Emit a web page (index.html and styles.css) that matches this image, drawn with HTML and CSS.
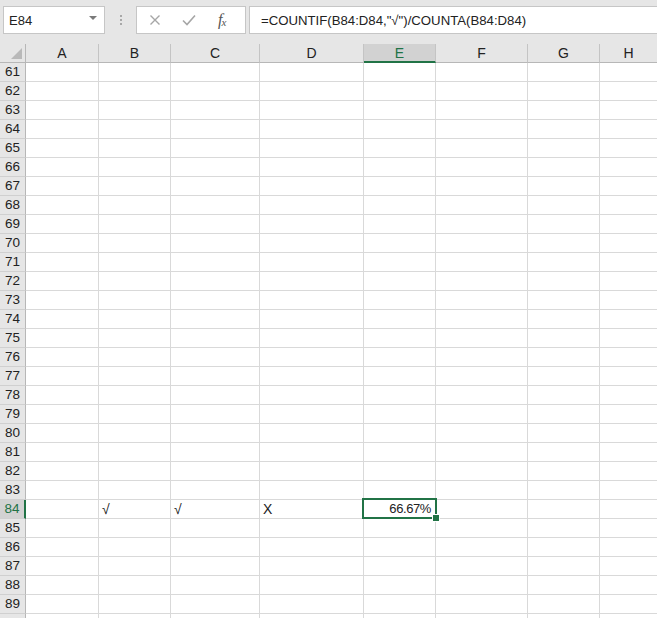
FILE: index.html
```html
<!DOCTYPE html>
<html>
<head>
<meta charset="utf-8">
<link rel="stylesheet" href="styles.css">
</head>
<body>
<div class="toolbar">
  <div class="namebox"><span class="name">E84</span><span class="arrow"></span></div>
  <div class="dots"><i></i><i></i><i></i></div>
  <div class="fxbox">
    <svg class="ico" width="14" height="14" viewBox="0 0 14 14"><path d="M2.5 2.5 L11.5 11.5 M11.5 2.5 L2.5 11.5" stroke="#a6a6a6" stroke-width="1.4" fill="none"/></svg>
    <svg class="ico" width="16" height="14" viewBox="0 0 16 14"><path d="M2 7.5 L6 11.5 L14 2.5" stroke="#a6a6a6" stroke-width="1.6" fill="none"/></svg>
    <span class="fx">f<sub>x</sub></span>
  </div>
  <div class="formula">=COUNTIF(B84:D84,"√")/COUNTA(B84:D84)</div>
</div>
<div class="grid">
  <div class="corner"><span class="tri"></span></div><div class="ch">A</div><div class="ch">B</div><div class="ch">C</div><div class="ch">D</div><div class="ch sel">E</div><div class="ch">F</div><div class="ch">G</div><div class="ch last">H</div>
  <div class="rh">61</div><div class="c"></div><div class="c"></div><div class="c"></div><div class="c"></div><div class="c"></div><div class="c"></div><div class="c"></div><div class="c last"></div>
  <div class="rh">62</div><div class="c"></div><div class="c"></div><div class="c"></div><div class="c"></div><div class="c"></div><div class="c"></div><div class="c"></div><div class="c last"></div>
  <div class="rh">63</div><div class="c"></div><div class="c"></div><div class="c"></div><div class="c"></div><div class="c"></div><div class="c"></div><div class="c"></div><div class="c last"></div>
  <div class="rh">64</div><div class="c"></div><div class="c"></div><div class="c"></div><div class="c"></div><div class="c"></div><div class="c"></div><div class="c"></div><div class="c last"></div>
  <div class="rh">65</div><div class="c"></div><div class="c"></div><div class="c"></div><div class="c"></div><div class="c"></div><div class="c"></div><div class="c"></div><div class="c last"></div>
  <div class="rh">66</div><div class="c"></div><div class="c"></div><div class="c"></div><div class="c"></div><div class="c"></div><div class="c"></div><div class="c"></div><div class="c last"></div>
  <div class="rh">67</div><div class="c"></div><div class="c"></div><div class="c"></div><div class="c"></div><div class="c"></div><div class="c"></div><div class="c"></div><div class="c last"></div>
  <div class="rh">68</div><div class="c"></div><div class="c"></div><div class="c"></div><div class="c"></div><div class="c"></div><div class="c"></div><div class="c"></div><div class="c last"></div>
  <div class="rh">69</div><div class="c"></div><div class="c"></div><div class="c"></div><div class="c"></div><div class="c"></div><div class="c"></div><div class="c"></div><div class="c last"></div>
  <div class="rh">70</div><div class="c"></div><div class="c"></div><div class="c"></div><div class="c"></div><div class="c"></div><div class="c"></div><div class="c"></div><div class="c last"></div>
  <div class="rh">71</div><div class="c"></div><div class="c"></div><div class="c"></div><div class="c"></div><div class="c"></div><div class="c"></div><div class="c"></div><div class="c last"></div>
  <div class="rh">72</div><div class="c"></div><div class="c"></div><div class="c"></div><div class="c"></div><div class="c"></div><div class="c"></div><div class="c"></div><div class="c last"></div>
  <div class="rh">73</div><div class="c"></div><div class="c"></div><div class="c"></div><div class="c"></div><div class="c"></div><div class="c"></div><div class="c"></div><div class="c last"></div>
  <div class="rh">74</div><div class="c"></div><div class="c"></div><div class="c"></div><div class="c"></div><div class="c"></div><div class="c"></div><div class="c"></div><div class="c last"></div>
  <div class="rh">75</div><div class="c"></div><div class="c"></div><div class="c"></div><div class="c"></div><div class="c"></div><div class="c"></div><div class="c"></div><div class="c last"></div>
  <div class="rh">76</div><div class="c"></div><div class="c"></div><div class="c"></div><div class="c"></div><div class="c"></div><div class="c"></div><div class="c"></div><div class="c last"></div>
  <div class="rh">77</div><div class="c"></div><div class="c"></div><div class="c"></div><div class="c"></div><div class="c"></div><div class="c"></div><div class="c"></div><div class="c last"></div>
  <div class="rh">78</div><div class="c"></div><div class="c"></div><div class="c"></div><div class="c"></div><div class="c"></div><div class="c"></div><div class="c"></div><div class="c last"></div>
  <div class="rh">79</div><div class="c"></div><div class="c"></div><div class="c"></div><div class="c"></div><div class="c"></div><div class="c"></div><div class="c"></div><div class="c last"></div>
  <div class="rh">80</div><div class="c"></div><div class="c"></div><div class="c"></div><div class="c"></div><div class="c"></div><div class="c"></div><div class="c"></div><div class="c last"></div>
  <div class="rh">81</div><div class="c"></div><div class="c"></div><div class="c"></div><div class="c"></div><div class="c"></div><div class="c"></div><div class="c"></div><div class="c last"></div>
  <div class="rh">82</div><div class="c"></div><div class="c"></div><div class="c"></div><div class="c"></div><div class="c"></div><div class="c"></div><div class="c"></div><div class="c last"></div>
  <div class="rh">83</div><div class="c"></div><div class="c"></div><div class="c"></div><div class="c"></div><div class="c"></div><div class="c"></div><div class="c"></div><div class="c last"></div>
  <div class="rh sel">84</div><div class="c"></div><div class="c txt">√</div><div class="c txt">√</div><div class="c txt">X</div><div class="c num active">66.67%<span class="selbox"></span><span class="handle"></span></div><div class="c"></div><div class="c"></div><div class="c last"></div>
  <div class="rh">85</div><div class="c"></div><div class="c"></div><div class="c"></div><div class="c"></div><div class="c"></div><div class="c"></div><div class="c"></div><div class="c last"></div>
  <div class="rh">86</div><div class="c"></div><div class="c"></div><div class="c"></div><div class="c"></div><div class="c"></div><div class="c"></div><div class="c"></div><div class="c last"></div>
  <div class="rh">87</div><div class="c"></div><div class="c"></div><div class="c"></div><div class="c"></div><div class="c"></div><div class="c"></div><div class="c"></div><div class="c last"></div>
  <div class="rh">88</div><div class="c"></div><div class="c"></div><div class="c"></div><div class="c"></div><div class="c"></div><div class="c"></div><div class="c"></div><div class="c last"></div>
  <div class="rh">89</div><div class="c"></div><div class="c"></div><div class="c"></div><div class="c"></div><div class="c"></div><div class="c"></div><div class="c"></div><div class="c last"></div>
  <div class="rh"></div><div class="c"></div><div class="c"></div><div class="c"></div><div class="c"></div><div class="c"></div><div class="c"></div><div class="c"></div><div class="c last"></div>
</div>
</body>
</html>
```
FILE: styles.css
```css
* { box-sizing: border-box; }
html, body { margin: 0; padding: 0; }
body {
  width: 657px;
  height: 618px;
  overflow: hidden;
  background: #ffffff;
  font-family: "Liberation Sans", Arial, sans-serif;
  color: #222;
}
.toolbar {
  height: 44px;
  background: #e6e6e6;
  display: flex;
  align-items: flex-start;
  padding-top: 6px;
  padding-left: 3px;
}
.namebox {
  width: 102px;
  height: 28px;
  background: #fff;
  border: 1px solid #c6c6c6;
  display: flex;
  align-items: center;
  justify-content: space-between;
  padding: 0 7px 0 5px;
  font-size: 13px;
  color: #222;
}
.arrow {
  width: 0; height: 0;
  border-left: 4px solid transparent;
  border-right: 4px solid transparent;
  border-top: 4px solid #7a7a7a;
  margin-top: -4px;
}
.dots {
  width: 31px;
  height: 28px;
  display: flex;
  flex-direction: column;
  align-items: center;
  justify-content: center;
  gap: 2px;
}
.dots i {
  display: block;
  width: 2px; height: 2px;
  background: #a8a8a8;
}
.fxbox {
  width: 110px;
  height: 28px;
  background: #fff;
  border: 1px solid #c6c6c6;
  display: flex;
  align-items: center;
  padding-left: 11px;
  gap: 19px;
}
.fx {
  font-family: "Liberation Serif", serif;
  font-style: italic;
  font-size: 16px;
  color: #555;
  margin-left: 2px;
  letter-spacing: -1px;
}
.fx sub { font-size: 11px; vertical-align: -1px; }
.formula {
  margin-left: 3px;
  flex: 1;
  height: 28px;
  background: #fff;
  border: 1px solid #c6c6c6;
  border-right: none;
  padding-left: 11px;
  display: flex;
  align-items: center;
  font-size: 13.2px;
  color: #222;
  white-space: nowrap;
}
.grid {
  display: grid;
  grid-template-columns: 26px 73px 72px 89px 104px 72px 92px 72px 1fr;
  grid-template-rows: 19px;
  grid-auto-rows: 19px;
}
.corner {
  background: #e6e6e6;
  border-right: 1px solid #b7b7b7;
  border-bottom: 1px solid #b7b7b7;
  position: relative;
}
.tri {
  position: absolute;
  right: 3px; bottom: 3px;
  width: 0; height: 0;
  border-left: 11px solid transparent;
  border-bottom: 11px solid #b9b9b9;
}
.ch {
  background: #e6e6e6;
  border-right: 1px solid #c4c4c4;
  border-bottom: 1px solid #b7b7b7;
  text-align: center;
  font-size: 14px;
  line-height: 18px;
  color: #222;
}
.ch.sel {
  background: #d2d2d2;
  color: #217346;
  border-bottom: 2px solid #217346;
}
.ch.last { border-right: none; }
.rh {
  background: #e6e6e6;
  border-right: 1px solid #b7b7b7;
  border-bottom: 1px solid #d0d0d0;
  text-align: center;
  font-size: 13.5px;
  line-height: 18px;
  color: #222;
}
.rh.sel {
  background: #d2d2d2;
  color: #217346;
  border-right: 2px solid #217346;
}
.c {
  border-right: 1px solid #d9d9d9;
  border-bottom: 1px solid #d9d9d9;
  font-size: 14px;
  line-height: 18px;
  padding: 0 3px;
  white-space: nowrap;
}
.c.last { border-right: none; }
.txt { color: #222; }
.num {
  text-align: right;
  padding-right: 4px;
  letter-spacing: -0.4px;
  font-size: 13px;
}
.active { position: relative; }
.selbox {
  position: absolute;
  left: -2px; top: -2px; right: -2px; bottom: -1px;
  border: 2px solid #217346;
}
.handle {
  position: absolute;
  right: -4px; bottom: -3px;
  width: 6px; height: 6px;
  background: #217346;
  outline: 1px solid #fff;
}
```
